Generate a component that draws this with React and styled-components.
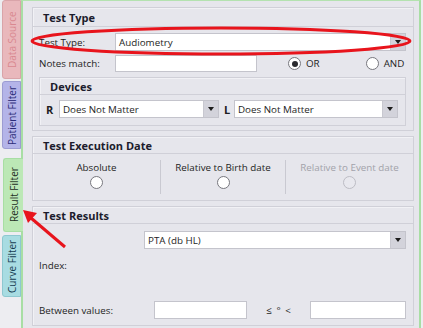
import React from "react"
import styled, { createGlobalStyle } from "styled-components"

const GlobalStyle = createGlobalStyle`
  html, body {
    margin: 0;
    padding: 0;
    background: #ededf1;
  }
  body {
    font-family: "Open Sans", "Noto Sans", sans-serif;
    font-size: 9.8px;
    color: #1e1e24;
  }
`

const Root = styled.div`
  position: relative;
  width: 423px;
  height: 328px;
  display: flex;
  overflow: hidden;
  background: #ededf1;
`

const TabStrip = styled.div`
  width: 21px;
  flex-shrink: 0;
  display: flex;
  flex-direction: column;
  position: relative;
  z-index: 1;
`

const Tab = styled.div`
  writing-mode: vertical-rl;
  transform: rotate(180deg);
  box-sizing: border-box;
  display: flex;
  align-items: center;
  justify-content: center;
  height: ${(p) => p.$h}px;
  margin-top: ${(p) => p.$mt || 0}px;
  margin-left: ${(p) => (p.$active ? 3 : 2)}px;
  width: ${(p) => (p.$active ? 20 : 19)}px;
  background: ${(p) => p.$bg};
  color: ${(p) => p.$fg};
  border: 1px solid ${(p) => p.$border};
  border-left: ${(p) => (p.$active ? "none" : `1px solid ${p.$border}`)};
  border-radius: 0 3px 3px 0;
  font-size: 10px;
  white-space: nowrap;
`

const Panel = styled.div`
  width: 400px;
  box-sizing: border-box;
  border-left: 2px solid #a8dea4;
  border-right: 2px solid #a8dea4;
  border-top: 1px solid #b4e2b0;
  background: #e6e6ec;
  padding: 6px 5px 0 9px;
  display: flex;
  flex-direction: column;
  gap: 5px;
`

const Group = styled.div`
  border: 1px solid #d0d0d8;
  background: #e6e6ec;
  box-shadow: inset 1px 1px 0 #f1f1f5;
`

const GroupHeader = styled.div`
  height: ${(p) => p.$h || 17}px;
  box-sizing: border-box;
  border-bottom: 1px solid #d0d0d8;
  padding-left: ${(p) => p.$pl || 10}px;
  display: flex;
  align-items: center;
  font-weight: 700;
  font-size: 11px;
  color: #1c1c2c;
`

const TypeBody = styled.div`
  padding: 6px 7px 4px 6px;
  display: flex;
  flex-direction: column;
`

const Row = styled.div`
  display: flex;
  align-items: center;
  margin-top: ${(p) => p.$mt || 0}px;
`

const Label = styled.div`
  width: ${(p) => p.$w}px;
  flex-shrink: 0;
  font-weight: ${(p) => (p.$bold ? 700 : 400)};
  font-size: ${(p) => (p.$bold ? 11 : 9.8)}px;
`

const Combo = styled.div`
  width: ${(p) => (p.$w ? `${p.$w}px` : "auto")};
  flex: ${(p) => (p.$w ? "none" : 1)};
  height: 18px;
  box-sizing: border-box;
  background: #fff;
  border: 1px solid #c4c4cc;
  display: flex;
  align-items: stretch;
  margin-left: ${(p) => p.$ml || 0}px;
`

const ComboText = styled.div`
  flex: 1;
  padding-left: 3px;
  display: flex;
  align-items: center;
  white-space: nowrap;
  overflow: hidden;
`

const DropButton = styled.div`
  width: 14px;
  background: #d3d3db;
  border-left: 1px solid #c8c8d0;
  display: flex;
  align-items: center;
  justify-content: center;
  &::after {
    content: "";
    border-left: 3px solid transparent;
    border-right: 3px solid transparent;
    border-top: 4px solid #1c1c1c;
  }
`

const TextBox = styled.div`
  width: ${(p) => p.$w}px;
  height: ${(p) => p.$h || 17}px;
  box-sizing: border-box;
  background: #fff;
  border: 1px solid #c4c4cc;
  margin-left: ${(p) => p.$ml || 0}px;
  flex-shrink: 0;
`

const Radio = styled.div`
  width: 13px;
  height: 13px;
  box-sizing: border-box;
  border-radius: 50%;
  border: 1.5px solid ${(p) => (p.$disabled ? "#bcbcc4" : "#77777e")};
  background: ${(p) => (p.$disabled ? "#e8e8ee" : "#fff")};
  display: flex;
  align-items: center;
  justify-content: center;
  flex-shrink: 0;
  &::after {
    content: "";
    display: ${(p) => (p.$checked ? "block" : "none")};
    width: 6px;
    height: 6px;
    border-radius: 50%;
    background: #2a2a2e;
  }
`

const RadioOption = styled.div`
  display: flex;
  align-items: center;
  gap: 5px;
  margin-left: ${(p) => p.$ml || 0}px;
`

const SubGroup = styled(Group)`
  margin-top: 5px;
`

const DevRow = styled.div`
  display: flex;
  align-items: center;
  padding: 5px 7px 7px 6px;
`

const ExecBody = styled.div`
  display: grid;
  grid-template-columns: 127px 125px 1fr;
  padding: 6px 0 6px;
`

const ExecCol = styled.div`
  height: 33px;
  border-left: ${(p) => (p.$first ? "none" : "1px solid #c9c9d1")};
  display: flex;
  flex-direction: column;
  align-items: center;
  color: ${(p) => (p.$disabled ? "#a2a2aa" : "inherit")};
  padding-top: 1px;
  gap: 2px;
  white-space: nowrap;
`

const ResultsBody = styled.div`
  padding: 7px 7px 6px 6px;
  display: flex;
  flex-direction: column;
`

const Between = styled.div`
  width: 63px;
  text-align: center;
  word-spacing: 2px;
`

const Overlay = styled.svg`
  position: absolute;
  left: 0;
  top: 0;
  pointer-events: none;
  z-index: 5;
`

const tabs = [
  { label: "Data Source", h: 79, bg: "#e9b8bc", fg: "#d98890", border: "#d9a4a9" },
  { label: "Patient Filter", h: 68, mt: 2, bg: "#b4b4e8", fg: "#2c2c78", border: "#9c9cd2" },
  { label: "Result Filter", h: 74, mt: 9, bg: "#bce8b6", fg: "#1e2e1e", border: "#a8dea4", active: true },
  { label: "Curve Filter", h: 62, mt: 3, bg: "#a8dce2", fg: "#173c52", border: "#8ec8d0" },
]

export default function App() {
  return (
    <Root>
      <GlobalStyle />
      <TabStrip>
        {tabs.map((t) => (
          <Tab
            key={t.label}
            $h={t.h}
            $mt={t.mt}
            $bg={t.bg}
            $fg={t.fg}
            $border={t.border}
            $active={t.active}
          >
            {t.label}
          </Tab>
        ))}
      </TabStrip>

      <Panel>
        <Group>
          <GroupHeader $h={19}>Test Type</GroupHeader>
          <TypeBody>
            <Row>
              <Label $w={76}>Test Type:</Label>
              <Combo>
                <ComboText>Audiometry</ComboText>
                <DropButton />
              </Combo>
            </Row>
            <Row $mt={4}>
              <Label $w={76}>Notes match:</Label>
              <TextBox $w={142} />
              <RadioOption $ml={31}>
                <Radio $checked />
                OR
              </RadioOption>
              <RadioOption $ml={46}>
                <Radio />
                AND
              </RadioOption>
            </Row>
            <SubGroup>
              <GroupHeader>Devices</GroupHeader>
              <DevRow>
                <Label $w={13} $bold>R</Label>
                <Combo $w={160}>
                  <ComboText>Does Not Matter</ComboText>
                  <DropButton />
                </Combo>
                <Label $w={10} $bold style={{ marginLeft: 5 }}>L</Label>
                <Combo>
                  <ComboText>Does Not Matter</ComboText>
                  <DropButton />
                </Combo>
              </DevRow>
            </SubGroup>
          </TypeBody>
        </Group>

        <Group>
          <GroupHeader>Test Execution Date</GroupHeader>
          <ExecBody>
            <ExecCol $first>
              Absolute
              <Radio />
            </ExecCol>
            <ExecCol>
              Relative to Birth date
              <Radio />
            </ExecCol>
            <ExecCol $disabled>
              Relative to Event date
              <Radio $disabled />
            </ExecCol>
          </ExecBody>
        </Group>

        <Group>
          <GroupHeader>Test Results</GroupHeader>
          <ResultsBody>
            <Row>
              <Combo $ml={105}>
                <ComboText>PTA (db HL)</ComboText>
                <DropButton />
              </Combo>
            </Row>
            <Row $mt={10}>
              <Label $w={100}>Index:</Label>
            </Row>
            <Row $mt={29}>
              <Label $w={115}>Between values:</Label>
              <TextBox $w={93} $h={18} />
              <Between>≤ ° &lt;</Between>
              <TextBox $w={96} $h={18} />
            </Row>
          </ResultsBody>
        </Group>
      </Panel>

      <Overlay width="423" height="328" viewBox="0 0 423 328">
        <ellipse cx="221" cy="41" rx="189" ry="13" fill="none" stroke="#e8141c" strokeWidth="3" />
        <line x1="65" y1="247" x2="31" y2="218" stroke="#e8141c" strokeWidth="3" />
        <polygon points="23,210 37,213 28,223" fill="#e8141c" />
      </Overlay>
    </Root>
  )
}
